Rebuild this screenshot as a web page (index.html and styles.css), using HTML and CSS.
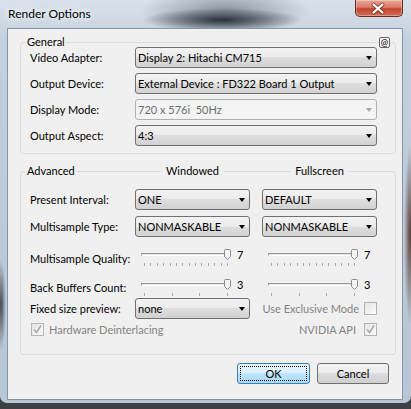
FILE: index.html
```html
<!DOCTYPE html>
<html lang="en">
<head>
    <meta charset="UTF-8">
    <meta name="viewport" content="width=device-width, initial-scale=1.0">
    <title>Render Options</title>
    <link rel="stylesheet" href="styles.css">
</head>
<body>
    <div class="window">
        <div class="titlebar">
            <span class="title">Render Options</span>
            <div class="close-btn">
                <svg width="48" height="17" viewBox="0 0 48 17">
                    <path d="M19.5 4.5 L28.5 12.5 M28.5 4.5 L19.5 12.5" stroke="#6a2418" stroke-width="4" stroke-linecap="round" opacity="0.7"/>
                    <path d="M19.5 4.5 L28.5 12.5 M28.5 4.5 L19.5 12.5" stroke="#fff" stroke-width="2.2" stroke-linecap="round"/>
                </svg>
            </div>
        </div>
        <div class="client">
            <div class="group general">
                <div class="group-head"><span class="caption">General</span></div>
                <span class="at-btn">@</span>
                <div class="form-row">
                    <span class="label">Video Adapter:</span>
                    <div class="combo"><span>Display 2: Hitachi CM715</span><span class="arrow"></span></div>
                </div>
                <div class="form-row">
                    <span class="label">Output Device:</span>
                    <div class="combo"><span>External Device : FD322 Board 1 Output</span><span class="arrow"></span></div>
                </div>
                <div class="form-row">
                    <span class="label">Display Mode:</span>
                    <div class="combo disabled"><span>720 x 576i&nbsp; 50Hz</span><span class="arrow"></span></div>
                </div>
                <div class="form-row last">
                    <span class="label">Output Aspect:</span>
                    <div class="combo"><span>4:3</span><span class="arrow"></span></div>
                </div>
            </div>

            <div class="group advanced">
                <div class="group-head cols">
                    <span><span class="caption">Advanced</span></span>
                    <span class="col-title"><span class="caption">Windowed</span></span>
                    <span class="col-title"><span class="caption">Fullscreen</span></span>
                </div>
                <div class="adv-row">
                    <span class="label">Present Interval:</span>
                    <div class="combo"><span>ONE</span><span class="arrow"></span></div>
                    <div class="combo"><span>DEFAULT</span><span class="arrow"></span></div>
                </div>
                <div class="adv-row">
                    <span class="label">Multisample Type:</span>
                    <div class="combo"><span>NONMASKABLE</span><span class="arrow"></span></div>
                    <div class="combo"><span>NONMASKABLE</span><span class="arrow"></span></div>
                </div>
                <div class="adv-row slider-row quality">
                    <span class="label">Multisample Quality:</span>
                    <div class="slider">
                        <div class="slider-body">
                            <div class="track"><span class="groove"></span><svg class="thumb" width="7" height="11" viewBox="0 0 7 11"><path d="M0.5 1.5 Q0.5 0.5 1.5 0.5 H5.5 Q6.5 0.5 6.5 1.5 V7.5 L3.5 10.5 L0.5 7.5 Z" fill="#f5f5f5" stroke="#8a8a8a"/></svg></div>
                            <div class="ticks"><i></i><i></i><i></i><i></i><i></i><i></i><i></i><i></i><i></i><i></i><i></i><i></i><i></i><i></i></div>
                        </div>
                        <span class="slider-val">7</span>
                    </div>
                    <div class="slider">
                        <div class="slider-body">
                            <div class="track"><span class="groove"></span><svg class="thumb" width="7" height="11" viewBox="0 0 7 11"><path d="M0.5 1.5 Q0.5 0.5 1.5 0.5 H5.5 Q6.5 0.5 6.5 1.5 V7.5 L3.5 10.5 L0.5 7.5 Z" fill="#f5f5f5" stroke="#8a8a8a"/></svg></div>
                            <div class="ticks"><i></i><i></i><i></i><i></i><i></i><i></i><i></i><i></i><i></i><i></i><i></i><i></i><i></i><i></i></div>
                        </div>
                        <span class="slider-val">7</span>
                    </div>
                </div>
                <div class="adv-row slider-row buffers">
                    <span class="label">Back Buffers Count:</span>
                    <div class="slider">
                        <div class="slider-body">
                            <div class="track"><span class="groove"></span><svg class="thumb" width="7" height="11" viewBox="0 0 7 11"><path d="M0.5 1.5 Q0.5 0.5 1.5 0.5 H5.5 Q6.5 0.5 6.5 1.5 V7.5 L3.5 10.5 L0.5 7.5 Z" fill="#f5f5f5" stroke="#8a8a8a"/></svg></div>
                            <div class="ticks"><i></i><i></i><i></i><i></i></div>
                        </div>
                        <span class="slider-val">3</span>
                    </div>
                    <div class="slider">
                        <div class="slider-body">
                            <div class="track"><span class="groove"></span><svg class="thumb" width="7" height="11" viewBox="0 0 7 11"><path d="M0.5 1.5 Q0.5 0.5 1.5 0.5 H5.5 Q6.5 0.5 6.5 1.5 V7.5 L3.5 10.5 L0.5 7.5 Z" fill="#f5f5f5" stroke="#8a8a8a"/></svg></div>
                            <div class="ticks"><i></i><i></i><i></i><i></i></div>
                        </div>
                        <span class="slider-val">3</span>
                    </div>
                </div>
                <div class="adv-row preview-row">
                    <span class="label">Fixed size preview:</span>
                    <div class="combo"><span>none</span><span class="arrow"></span></div>
                    <div class="check-row right">
                        <span>Use Exclusive Mode</span>
                        <span class="check"></span>
                    </div>
                </div>
                <div class="adv-row check-line">
                    <div class="check-row wide">
                        <span class="check"><svg width="11" height="11" viewBox="0 0 11 11"><path d="M2 5.5 L4.5 8.5 L9 1.5" fill="none" stroke="#a8a8a8" stroke-width="1.4"/></svg></span>
                        <span>Hardware Deinterlacing</span>
                    </div>
                    <div class="check-row right api">
                        <span>NVIDIA API</span>
                        <span class="check"><svg width="11" height="11" viewBox="0 0 11 11"><path d="M2 5.5 L4.5 8.5 L9 1.5" fill="none" stroke="#a8a8a8" stroke-width="1.4"/></svg></span>
                    </div>
                </div>
            </div>

            <div class="buttons">
                <button class="btn btn-default"><span>OK</span></button>
                <button class="btn">Cancel</button>
            </div>
        </div>
    </div>
</body>
</html>
```

FILE: styles.css
```css
body {
    margin: 0;
    width: 411px;
    height: 409px;
    overflow: hidden;
    background-color: #3c3f43;
    font-family: Lato, 'Noto Sans', sans-serif;
    font-size: 11px;
    color: #000;
}
.window {
    width: 411px;
    height: 403px;
    display: flex;
    flex-direction: column;
    border-radius: 0 0 7px 7px;
    background:
        radial-gradient(ellipse 80px 12px at 222px 20px, rgba(28, 34, 44, 0.9), rgba(28, 34, 44, 0)),
        radial-gradient(ellipse 85px 22px at 225px 10px, rgba(80, 90, 100, 0.55), rgba(80, 90, 100, 0)),
        radial-gradient(ellipse 6px 90px at 410px 235px, rgba(85, 58, 48, 0.95), rgba(85, 58, 48, 0)),
        radial-gradient(ellipse 5px 45px at 1px 305px, rgba(55, 60, 66, 0.9), rgba(55, 60, 66, 0)),
        linear-gradient(#d9e2eb, #c3d0dd 40px, #b7c6d4);
}
.titlebar {
    height: 28px;
    flex-shrink: 0;
    display: flex;
    justify-content: space-between;
}
.title {
    padding-left: 8px;
    line-height: 28px;
    font-size: 12px;
    text-shadow: 0 0 6px #fff, 0 0 10px #fff;
}
.close-btn {
    width: 48px;
    height: 17px;
    margin-right: 8px;
    box-sizing: border-box;
    border: 1px solid #6b2a20;
    border-top: none;
    border-radius: 0 0 5px 5px;
    background: linear-gradient(#e9a898 0%, #d97a66 45%, #c5432e 55%, #d0705a 100%);
    box-shadow: inset 0 0 0 1px rgba(255, 255, 255, 0.3);
    display: flex;
    align-items: center;
    justify-content: center;
}
.close-btn svg {
    margin-left: -2px;
}
.client {
    margin: 0 8px 0 7px;
    height: 372px;
    box-sizing: border-box;
    border: 1px solid #8596a9;
    background-color: #f0f0f0;
    padding: 13px 6px 0 12px;
}

/* group boxes */
.group {
    position: relative;
    border: 1px solid #d5dfe5;
    border-radius: 3px;
    padding: 0 18px 0 9px;
}
.general {
    padding-bottom: 7px;
}
.advanced {
    margin-top: 17px;
    padding-bottom: 18px;
}
.group-head {
    height: 14px;
    line-height: 14px;
    margin: -8px 0 -2px -4px;
    display: flex;
}
.caption {
    background-color: #f0f0f0;
    padding: 0 1px;
}
.group-head.cols {
    display: grid;
    grid-template-columns: 97px 115px 115px;
    column-gap: 12px;
    margin-bottom: 11px;
}
.col-title {
    text-align: center;
}
.col-title .caption {
    padding: 0 4px;
}
.at-btn {
    position: absolute;
    top: -6px;
    right: 5px;
    width: 11px;
    height: 11px;
    box-sizing: border-box;
    border: 1px solid #666;
    border-radius: 2px;
    background-color: #f4f4f4;
    font-size: 9px;
    line-height: 9px;
    text-align: center;
}

/* rows */
.form-row {
    display: grid;
    grid-template-columns: 105px 242px;
    align-items: center;
    margin-bottom: 5px;
}
.form-row.last {
    margin-top: 2px;
    margin-bottom: 0;
}
.adv-row {
    display: grid;
    grid-template-columns: 93px 115px 115px;
    column-gap: 12px;
    align-items: center;
    margin-top: 6px;
}
.label {
    white-space: nowrap;
}
.slider-row.quality {
    height: 22px;
    margin-top: 10px;
}
.slider-row.buffers {
    height: 20px;
    margin-top: 8px;
}
.preview-row {
    margin-top: 1px;
}
.check-line {
    margin-top: 4px;
}

/* combo boxes */
.combo {
    height: 21px;
    box-sizing: border-box;
    border: 1px solid #707070;
    border-radius: 3px;
    background: linear-gradient(#f3f3f3, #ebebeb 50%, #dedede 50%, #d2d2d2);
    display: flex;
    align-items: center;
    justify-content: space-between;
    padding: 0 4px 0 2px;
    white-space: nowrap;
}
.arrow {
    width: 0;
    height: 0;
    border-left: 3.5px solid transparent;
    border-right: 3.5px solid transparent;
    border-top: 4px solid #000;
}
.combo.disabled {
    border-color: #adb2b5;
    background: #f4f4f4;
    color: #6d6d6d;
}
.combo.disabled .arrow {
    border-top-color: #a8a8a8;
}

/* sliders */
.slider {
    align-self: start;
    margin-top: 2px;
    padding-left: 6px;
    display: flex;
    align-items: flex-start;
    gap: 6px;
}
.slider-body {
    width: 90px;
}
.track {
    display: flex;
    height: 11px;
}
.groove {
    flex: 1;
    height: 3px;
    margin-top: 4px;
    box-sizing: border-box;
    border-top: 1px solid #9a9a9a;
    border-left: 1px solid #9a9a9a;
    border-bottom: 1px solid #fff;
    background-color: #e3e3e3;
}
.thumb {
    display: block;
}
.ticks {
    display: flex;
    justify-content: space-between;
    padding: 0 3px;
    margin-top: 3px;
    height: 3px;
}
.ticks i {
    width: 1px;
    background-color: #a8a8a8;
}
.slider-val {
    line-height: 11px;
}

/* check boxes */
.check-row {
    display: flex;
    align-items: center;
    gap: 5px;
    color: #838383;
    white-space: nowrap;
}
.check-row.wide {
    grid-column: 1 / 3;
    margin-left: 1px;
}
.check-row.right {
    justify-content: flex-end;
    grid-column: 3;
}
.check-row.api {
    gap: 8px;
}
.check {
    width: 13px;
    height: 13px;
    box-sizing: border-box;
    border: 1px solid #b4b4b4;
    background: linear-gradient(135deg, #e4e4e4, #fbfbfb);
    display: inline-flex;
    align-items: center;
    justify-content: center;
}

/* dialog buttons */
.buttons {
    display: flex;
    justify-content: flex-end;
    gap: 7px;
    margin-top: 8px;
    padding-right: 7px;
}
.btn {
    width: 72px;
    height: 21px;
    box-sizing: border-box;
    border: 1px solid #707070;
    border-radius: 3px;
    background: linear-gradient(#f2f2f2, #ebebeb 50%, #dddddd 50%, #cfcfcf);
    font-family: inherit;
    font-size: 11px;
    color: #000;
    padding: 0;
}
.btn-default {
    width: 73px;
    border-color: #3c7fb1;
    background: linear-gradient(#eaf6fd, #d9f0fc 50%, #bee6fd 50%, #a7d9f5);
    padding: 2px;
}
.btn-default span {
    display: flex;
    align-items: center;
    justify-content: center;
    height: 100%;
    border: 1px dotted #000;
    box-sizing: border-box;
}
```
